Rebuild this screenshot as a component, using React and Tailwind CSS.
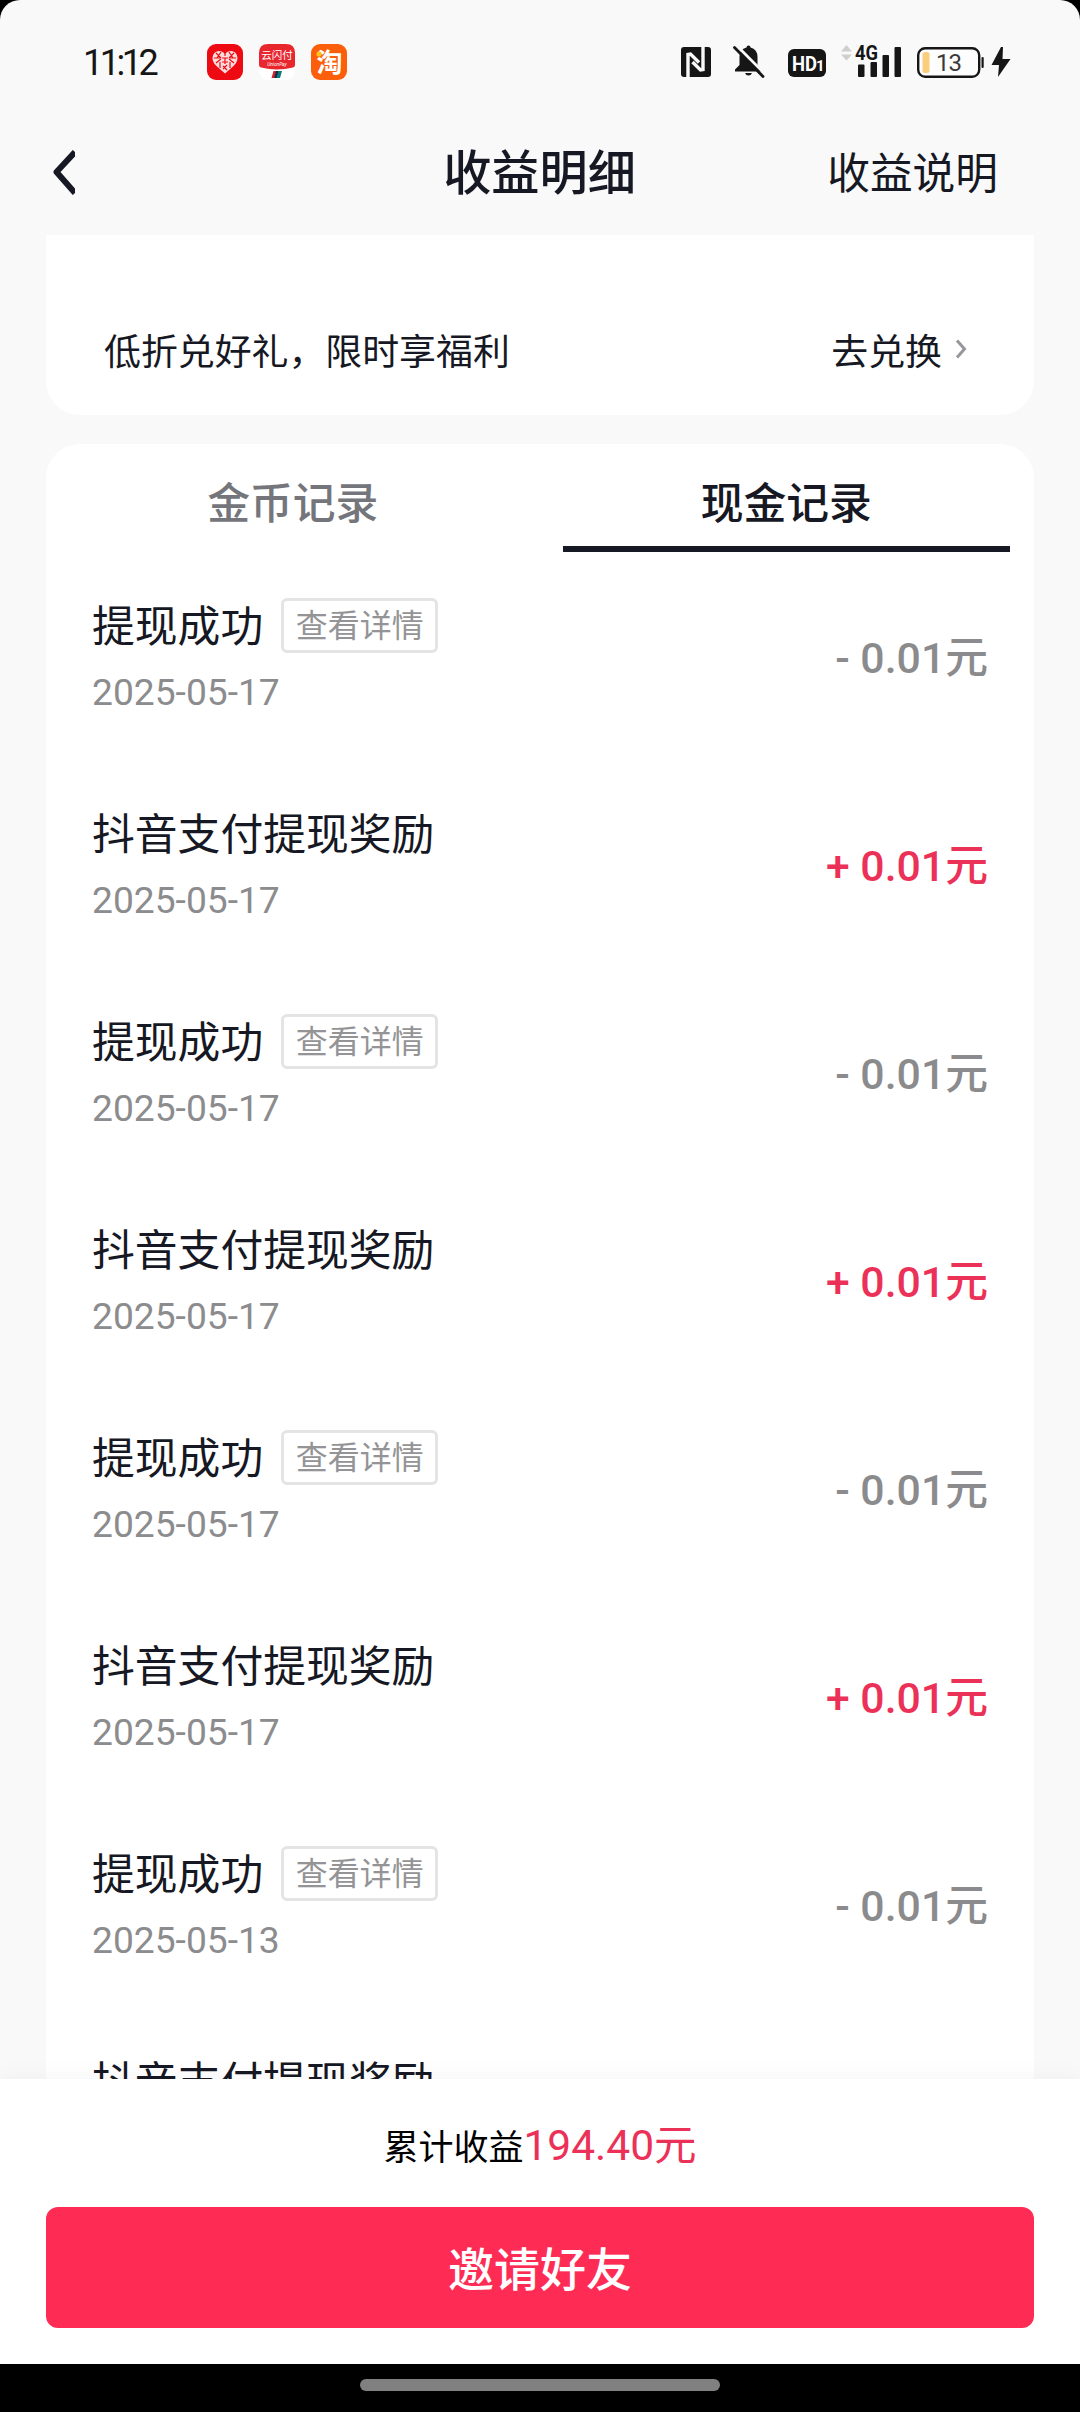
import React, { useState } from 'react';

const registros = [
  { tipo: 'retiro', fecha: '2025-05-17' },
  { tipo: 'premio', fecha: '2025-05-17' },
  { tipo: 'retiro', fecha: '2025-05-17' },
  { tipo: 'premio', fecha: '2025-05-17' },
  { tipo: 'retiro', fecha: '2025-05-17' },
  { tipo: 'premio', fecha: '2025-05-17' },
  { tipo: 'retiro', fecha: '2025-05-13' },
  { tipo: 'premio', fecha: '2025-05-13' },
];

const tabs = [
  { id: 'coins', label: '金币记录' },
  { id: 'cash', label: '现金记录' },
];

const AppIcons = () => (
  <div className="flex gap-4">
    {/* heart */}
    <svg width="36" height="36" viewBox="0 0 36 36">
      <rect width="36" height="36" rx="9" fill="#ee0a12" />
      <path d="M18 10C15 6 9.500 6 7 9.500C4 14 6 19 10 22.500L18 29.500L26 22.500C30 19 32 14 29 9.500C26.500 6 21 6 18 10Z" fill="#fbdcdc" />
      <path d="M9 9l5 5M14 8l-4 6M7 14h6M9 19l5-4M13 18v6M27 9l-5 5M22 8l4 6M29 14h-6M27 19l-5-4M23 18v6M16 22l4 4M20 21l-4 4M18 8v4M15 14h6M15 18h6M18 14v6" stroke="#ee0a12" strokeWidth="1.200" fill="none" />
    </svg>
    {/* UnionPay */}
    <svg width="36" height="36" viewBox="0 0 36 36">
      <rect width="36" height="36" rx="9" fill="#fff" />
      <path d="M9 0H27Q36 0 36 9V21Q36 23 34 23.500Q18 27.500 2 23.500Q0 23 0 21V9Q0 0 9 0Z" fill="#e8262d" />
      <text x="18" y="14.500" textAnchor="middle" fontSize="10.500" fill="#fff" fontFamily="Noto Sans CJK SC">云闪付</text>
      <text x="18" y="21.500" textAnchor="middle" fontSize="4.800" fontStyle="italic" fill="#fff" fontFamily="Roboto">UnionPay</text>
      <path d="M14.500 27h3l-2 7h-3z" fill="#d8232a" />
      <path d="M17 27h3l-2 7h-3z" fill="#10304f" />
      <path d="M19.500 27h3.500l-2 7h-3.500z" fill="#0b7a78" />
    </svg>
    {/* Taobao */}
    <svg width="36" height="36" viewBox="0 0 36 36">
      <rect width="36" height="36" rx="9" fill="#fb5f0b" />
      <text x="18.500" y="27.500" textAnchor="middle" fontSize="26" fontWeight="700" fill="#fff" fontFamily="Noto Sans CJK SC">淘</text>
      <circle cx="8" cy="10" r="2.600" fill="#ffc21a" />
    </svg>
  </div>
);

const StatusIcons = () => (
  <svg width="340" height="40" viewBox="675 42 340 40" fill="#161616" fontFamily="Roboto">
    {/* NFC */}
    <rect x="681" y="47" width="30" height="30" rx="3" />
    <path d="M688 77V54.500L690.500 54L699 62.500M703 47V69.500L700.500 70L692.500 62" stroke="#f9f9f9" strokeWidth="3.400" fill="none" />
    {/* muted bell */}
    <path d="M748.500 45.500Q750.500 45.500 750.500 47.500Q757.500 49.500 757.500 57V65L761.500 69.500V71.500H735V69.500L739.500 65V57Q739.500 49.500 746.500 47.500Q746.500 45.500 748.500 45.500Z" />
    <path d="M745 73H752Q751 75.500 748.500 75.500Q746 75.500 745 73Z" />
    <path d="M736 45L766 75" stroke="#f9f9f9" strokeWidth="3" />
    <path d="M734.500 47.500L763 76.500" stroke="#161616" strokeWidth="2.800" strokeLinecap="round" />
    {/* HD */}
    <rect x="788" y="49" width="38" height="28" rx="6" />
    <text x="792" y="70.500" fontSize="21" fontWeight="700" fill="#fff" textLength="25" lengthAdjust="spacingAndGlyphs">HD</text>
    <text x="816" y="70.500" fontSize="15" fontWeight="700" fill="#fff">1</text>
    {/* signal */}
    <path d="M846.500 45L852 51.500H841ZM846.500 60.500L852 54.500H841Z" fill="#cfcfcf" />
    <rect x="858" y="64.500" width="6.500" height="12.500" rx="1" />
    <rect x="870.500" y="62" width="6.500" height="15" rx="1" />
    <rect x="882.500" y="55" width="6.500" height="22" rx="1" />
    <rect x="894.500" y="47" width="6.500" height="30" rx="1" />
    <text x="855" y="60" fontSize="20" fontWeight="700" textLength="23" lengthAdjust="spacingAndGlyphs">4G</text>
    {/* battery */}
    <rect x="918.200" y="48.200" width="61" height="28.600" rx="7" fill="#fdfdfd" stroke="#161616" strokeWidth="2.400" />
    <rect x="922.500" y="52" width="7" height="21" rx="2.500" fill="#f9cf7d" />
    <rect x="981.500" y="57" width="2.200" height="11" rx="1" />
    <text x="948.500" y="71.300" fontSize="24" textAnchor="middle" fill="#3a3a3a" letterSpacing="-1">13</text>
    <path d="M1001 47L991.500 65H999L998 77L1010.500 59H1002.500L1003 47Z" />
  </svg>
);

const Registro = ({ tipo, fecha }) => {
  const esRetiro = tipo === 'retiro';
  return (
    <div className="h-[208px] shrink-0 flex justify-between">
      <div>
        <div className="h-[56px] flex items-center gap-[18px]">
          <span className="pt-[3px] text-[42.800px] leading-[56px] text-[#161823]">
            {esRetiro ? '提现成功' : '抖音支付提现奖励'}
          </span>
          {esRetiro && (
            <button className="w-[157px] h-[55px] border-[3px] border-[#e4e4e4] rounded-[6px] pt-[2px] text-[32px] leading-[46px] text-[#949496] whitespace-nowrap">
              查看详情
            </button>
          )}
        </div>
        <p className="mt-[17px] text-[37.200px] leading-[44px] text-[#8c8c8e]">{fecha}</p>
      </div>
      <p className={`pt-[33px] text-[42.800px] leading-[56px] font-medium ${esRetiro ? 'text-[#8b8b8d]' : 'text-[#ec3158]'}`}>
        {esRetiro ? '- 0.01元' : '+ 0.01元'}
      </p>
    </div>
  );
};

const App = () => {
  const [activo, setActivo] = useState('cash');

  return (
    <div className="bg-black w-[1080px] h-[2412px] overflow-hidden">
      <div className="h-[2364px] rounded-t-[20px] bg-[#f9f9f9] flex flex-col overflow-hidden font-['Roboto','Noto_Sans_CJK_SC',sans-serif]">
        {/* Status bar */}
        <div className="h-[124px] shrink-0 pl-[83px] pr-[65px] flex items-center justify-between">
          <div className="flex items-center">
            <span className="w-[124px] pt-[2px] text-[36px] leading-none tracking-[-3.5px] text-[#161616]">11:12</span>
            <AppIcons />
          </div>
          <StatusIcons />
        </div>

        {/* Header */}
        <div className="h-[111px] shrink-0 pl-[53px] pr-[82px] pb-[14px] grid grid-cols-[300px_1fr_300px] items-center text-[#161823]">
          <button>
            <svg width="22" height="46" viewBox="0 0 22 46">
              <path d="M22 2L3.500 22L22 43" fill="none" stroke="#161823" strokeWidth="6" strokeLinejoin="round" />
            </svg>
          </button>
          <h1 className="pt-[4px] pl-[28px] text-[48.200px] leading-none font-medium text-center">收益明细</h1>
          <span className="pt-[4px] text-[42.700px] leading-none text-right">收益说明</span>
        </div>

        {/* Exchange card */}
        <div className="h-[180px] shrink-0 mx-[46px] pl-[58px] pr-[67px] pt-[65px] pb-[14px] rounded-b-[34px] bg-white flex items-center justify-between text-[36.900px] leading-none text-[#161823]">
          <span className="pt-[5px]">低折兑好礼，限时享福利</span>
          <span className="flex items-center gap-[13px]">
            <span className="pt-[5px]">去兑换</span>
            <svg className="mb-[3px]" width="12" height="20" viewBox="0 0 12 20">
              <path d="M2 1.500L9.500 10L2 18.500" fill="none" stroke="#96979c" strokeWidth="3" />
            </svg>
          </span>
        </div>

        {/* Records */}
        <div className="flex-1 min-h-0 mt-[29px] mx-[46px] rounded-t-[34px] bg-white flex flex-col overflow-hidden">
          <div className="h-[108px] shrink-0 pl-[23px] pr-[24px] flex gap-[46px]">
            {tabs.map((tab) => (
              <button
                key={tab.id}
                onClick={() => setActivo(tab.id)}
                className={`flex-1 pt-[18px] text-[42.800px] leading-none font-medium border-b-[6px] ${
                  activo === tab.id ? 'text-[#161823] border-[#161823]' : 'text-[#75767c] border-transparent'
                }`}
              >
                {tab.label}
              </button>
            ))}
          </div>
          <div className="flex-1 min-h-0 pt-[45px] px-[46px] flex flex-col overflow-hidden">
            {registros.map((r, idx) => (
              <Registro key={idx} {...r} />
            ))}
          </div>
        </div>

        {/* Footer */}
        <div className="relative h-[285px] shrink-0 px-[46px] bg-white shadow-[0_-4px_20px_rgba(0,0,0,0.04)]">
          <p className="h-[128px] pt-[37px] text-center leading-[60px] text-[42.500px] text-[#ec3158]">
            <span className="text-[35px] text-black">累计收益</span>194.40元
          </p>
          <button className="w-full h-[121px] rounded-[12px] pt-[4px] bg-[#fe2c55] text-white text-[46px] leading-none font-medium">
            邀请好友
          </button>
        </div>
      </div>
      {/* Gesture bar */}
      <div className="h-[48px] pt-[15px] flex justify-center">
        <div className="w-[360px] h-[12px] rounded-full bg-[#808080]"></div>
      </div>
    </div>
  );
};

export default App;
